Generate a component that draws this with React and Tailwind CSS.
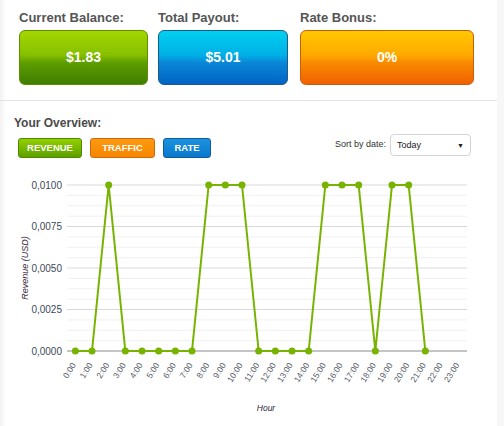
import React from "react";

const data = [0, 0, 0.01, 0, 0, 0, 0, 0, 0.01, 0.01, 0.01, 0, 0, 0, 0, 0.01, 0.01, 0.01, 0, 0.01, 0.01, 0];

function Chart() {
  const x0 = 67;
  const x1 = 467;
  const step = (x1 - x0) / 24;
  const yTop = 185;
  const yBot = 351;
  const tx = (i) => x0 + step * (i + 0.5);
  const ty = (v) => yBot - (v / 0.01) * (yBot - yTop);
  const major = [0, 1, 2, 3, 4].map((k) => yTop + k * ((yBot - yTop) / 4));
  const minor = [];
  for (let k = 0; k < 4; k++) {
    for (let j = 1; j < 4; j++) minor.push(yTop + k * ((yBot - yTop) / 4) + j * ((yBot - yTop) / 16));
  }
  const labels = ["0,0100", "0,0075", "0,0050", "0,0025", "0,0000"];
  const pts = data.map((v, i) => `${tx(i)},${ty(v)}`).join(" ");
  return (
    <svg width="504" height="261" viewBox="0 165 504 261" className="block">
      {minor.map((y, i) => (
        <line key={"m" + i} x1={x0} x2={x1} y1={y} y2={y} stroke="#f0f0f0" strokeWidth="1" />
      ))}
      {major.map((y, i) => (
        <line key={"M" + i} x1={x0} x2={x1} y1={y} y2={y} stroke={i === 4 ? "#8a8a8a" : "#d9d9d9"} strokeWidth="1" />
      ))}
      {major.map((y, i) => (
        <text key={"l" + i} x="62" y={y + 3.5} textAnchor="end" fontSize="10" fill="#3d4a5a" fontFamily="Liberation Sans, Arial, sans-serif">
          {labels[i]}
        </text>
      ))}
      {Array.from({ length: 24 }).map((_, i) => (
        <text
          key={"x" + i}
          x={tx(i) + 1}
          y={365}
          textAnchor="end"
          fontSize="8.5"
          fill="#555a66"
          fontFamily="Liberation Sans, Arial, sans-serif"
          transform={`rotate(-58 ${tx(i) + 1} 365)`}
        >
          {i}:00
        </text>
      ))}
      <text
        x="28"
        y="268"
        textAnchor="middle"
        fontSize="9"
        fontStyle="italic"
        fill="#3a2a3a"
        fontFamily="Liberation Sans, Arial, sans-serif"
        transform="rotate(-90 28 268)"
      >
        Revenue (USD)
      </text>
      <text x="266" y="411" textAnchor="middle" fontSize="8.5" fontStyle="italic" fill="#2a2a3a" fontFamily="Liberation Sans, Arial, sans-serif">
        Hour
      </text>
      <polyline points={pts} fill="none" stroke="#77b300" strokeWidth="2" strokeLinejoin="round" />
      {data.map((v, i) => (
        <circle key={"c" + i} cx={tx(i)} cy={ty(v)} r="3.5" fill="#77b300" />
      ))}
    </svg>
  );
}

function StatBox({ label, value, w, cls }) {
  return (
    <div className="flex flex-col">
      <div className="text-[13px] leading-[15px] font-bold text-[#555]">{label}</div>
      <div
        className={`mt-[5px] h-[55px] rounded-[6px] border-[1.5px] flex items-center justify-center text-white font-bold text-[14px] ${cls}`}
        style={{ width: w }}
      >
        {value}
      </div>
    </div>
  );
}

export default function App() {
  return (
    <div
      className="w-[504px] h-[426px] overflow-hidden bg-white border-r-[7px] border-[#f7f7f7] bg-gradient-to-r from-[#f2f2f2] via-white to-white"
      style={{ fontFamily: "'Liberation Sans', Arial, sans-serif", backgroundSize: "12px 100%", backgroundRepeat: "no-repeat", backgroundColor: "#fff" }}
    >
      <div className="pt-[10px] pl-[19px] pb-[15px] flex gap-[10px] border-b border-[#e2e2e2]">
        <StatBox
          label="Current Balance:"
          value="$1.83"
          w={129}
          cls="border-[#5f8f00] bg-[linear-gradient(to_bottom,#a4d600_0%,#86c000_45%,#5e9d00_60%,#3e7e00_100%)]"
        />
        <StatBox
          label="Total Payout:"
          value="$5.01"
          w={130}
          cls="border-[#1b5b86] bg-[linear-gradient(to_bottom,#00d0f0_0%,#00b0e6_45%,#0a86d6_60%,#0064c6_100%)]"
        />
        <div className="ml-[2px]">
          <StatBox
            label="Rate Bonus:"
            value="0%"
            w={174}
            cls="border-[#c85e10] bg-[linear-gradient(to_bottom,#ffc800_0%,#ffaa00_45%,#f88a00_60%,#f06000_100%)]"
          />
        </div>
      </div>

      <div className="flex justify-between pl-[14px] pr-[26px] pt-[15px]">
        <div className="flex flex-col">
          <div className="text-[12px] leading-[14px] font-bold text-[#4a4a4a]">Your Overview:</div>
          <div className="mt-[8px] flex gap-[8px] pl-[4px]">
            <div className="w-[64px] h-[20px] rounded-[3px] border border-[#4d8a00] bg-[linear-gradient(to_bottom,#94d000,#5c9f00)] text-white font-bold text-[9.5px] flex items-center justify-center">
              REVENUE
            </div>
            <div className="w-[65px] h-[20px] rounded-[3px] border border-[#d4660a] bg-[linear-gradient(to_bottom,#ff9a10,#f58600)] text-white font-bold text-[9.5px] flex items-center justify-center">
              TRAFFIC
            </div>
            <div className="w-[48px] h-[20px] rounded-[3px] border border-[#0d5d9c] bg-[linear-gradient(to_bottom,#1c92e0,#0a78cc)] text-white font-bold text-[9.5px] flex items-center justify-center">
              RATE
            </div>
          </div>
        </div>
        <div className="self-end mb-[2px] flex items-center gap-[4px]">
          <span className="text-[9px] text-[#333]">Sort by date:</span>
          <div className="w-[81px] h-[22px] rounded-[4px] border border-[#d4d4d4] bg-white flex items-center justify-between pl-[6px] pr-[6px]">
            <span className="text-[9px] text-[#222] mt-[2px]">Today</span>
            <span className="text-[7px] text-[#222] leading-none">▼</span>
          </div>
        </div>
      </div>

      <div className="pt-[7px]">
        <Chart />
      </div>
    </div>
  );
}
